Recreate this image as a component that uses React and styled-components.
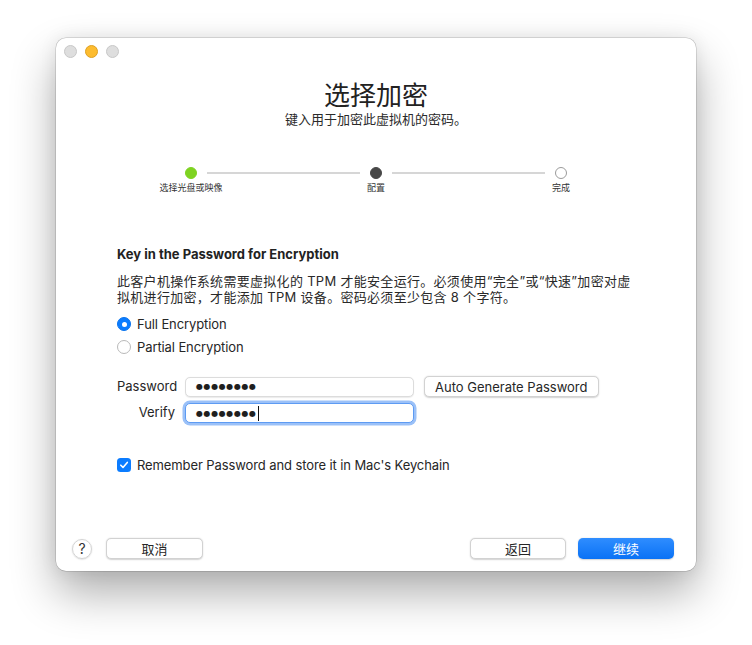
import React from 'react';
import styled, { createGlobalStyle } from 'styled-components';

const GlobalStyle = createGlobalStyle`
  html, body {
    margin: 0;
    padding: 0;
    background: #ffffff;
  }
  body {
    font-family: 'Inter', 'Noto Sans CJK SC', sans-serif;
    color: #262626;
    -webkit-font-smoothing: antialiased;
  }
`;

const Page = styled.div`
  width: 752px;
  height: 645px;
  padding: 38px 0 0 56px;
  box-sizing: border-box;
`;

const Window = styled.div`
  width: 640px;
  height: 533px;
  background: #ffffff;
  border-radius: 10px;
  display: flex;
  flex-direction: column;
  box-shadow: 0 0 0 0.5px rgba(0, 0, 0, 0.22), 0 22px 45px rgba(0, 0, 0, 0.32),
    0 0 18px rgba(0, 0, 0, 0.08);
`;

const TitleBar = styled.div`
  height: 26px;
  display: flex;
  align-items: center;
  gap: 8px;
  padding-left: 8px;
`;

const Light = styled.span`
  width: 11px;
  height: 11px;
  border-radius: 50%;
  background: ${(p) => (p.$active ? '#fdbc2f' : '#dedede')};
  border: 0.5px solid ${(p) => (p.$active ? '#dea123' : '#c8c8c8')};
`;

const Title = styled.h1`
  margin: 17px 0 0;
  font-size: 26px;
  line-height: 30px;
  font-weight: 400;
  text-align: center;
  color: #222;
`;

const Subtitle = styled.p`
  margin: 0;
  font-size: 13px;
  line-height: 16px;
  text-align: center;
  color: #2a2a2a;
`;

const Stepper = styled.div`
  margin-top: 40px;
  display: flex;
  justify-content: center;
  align-items: flex-start;
`;

const Step = styled.div`
  width: 12px;
  display: flex;
  flex-direction: column;
  align-items: center;
`;

const Dot = styled.span`
  width: 12px;
  height: 12px;
  border-radius: 50%;
  box-sizing: border-box;
  background: ${(p) => p.$color || '#fff'};
  border: 1px solid ${(p) => (p.$color ? p.$color : '#9b9b9b')};
`;

const StepLabel = styled.span`
  margin-top: 3px;
  font-size: 9px;
  line-height: 12px;
  white-space: nowrap;
  color: #333;
`;

const Connector = styled.span`
  width: 153px;
  height: 2px;
  margin: 5px 10px 0;
  background: #d6d6d6;
`;

const Content = styled.div`
  padding: 0 61px;
  display: flex;
  flex-direction: column;
`;

const Heading = styled.h2`
  margin: 52px 0 0;
  font-size: 13px;
  line-height: 16px;
  font-weight: 700;
  color: #222;
`;

const Paragraph = styled.p`
  margin: 11px 0 0;
  font-size: 13px;
  line-height: 16px;
  letter-spacing: 0.3px;
  color: #2a2a2a;
`;

const Options = styled.div`
  margin-top: 10px;
  display: flex;
  flex-direction: column;
  gap: 5px;
`;

const OptionRow = styled.label`
  display: flex;
  align-items: center;
  height: 18px;
  gap: 6px;
  font-size: 13px;
  letter-spacing: -0.1px;
  color: #262626;
`;

const Radio = styled.span`
  width: 14px;
  height: 14px;
  border-radius: 50%;
  box-sizing: border-box;
  display: flex;
  align-items: center;
  justify-content: center;
  background: ${(p) => (p.$checked ? '#0b7cff' : '#fff')};
  border: 1px solid ${(p) => (p.$checked ? '#0a74ee' : '#b9b9b9')};
  &::after {
    content: '';
    width: 5px;
    height: 5px;
    border-radius: 50%;
    background: #fff;
    display: ${(p) => (p.$checked ? 'block' : 'none')};
  }
`;

const Form = styled.div`
  margin-top: 20px;
  display: grid;
  grid-template-columns: 58px 229px auto;
  column-gap: 10px;
  row-gap: 6px;
  align-items: center;
`;

const FieldLabel = styled.span`
  font-size: 13px;
  text-align: right;
  color: #262626;
  margin-top: -2px;
`;

const Field = styled.div`
  height: 20px;
  box-sizing: border-box;
  border-radius: 5px;
  padding: 0 10px;
  display: flex;
  align-items: center;
  background: #fff;
  border: 1px solid ${(p) => (p.$focus ? '#5d9bf3' : '#dcdcdc')};
  box-shadow: ${(p) =>
    p.$focus ? '0 0 0 2.5px #9bc1f8' : '0 0.5px 1px rgba(0,0,0,0.08)'};
`;

const Mask = styled.span`
  font-family: 'DejaVu Sans', sans-serif;
  font-size: 8px;
  letter-spacing: 0.6px;
  color: #1f1f1f;
`;

const Caret = styled.span`
  width: 1px;
  height: 15px;
  background: #111;
  margin-left: 1px;
`;

const Button = styled.button`
  height: 21px;
  box-sizing: border-box;
  padding: 0 10px;
  border-radius: 5px;
  font-family: inherit;
  font-size: 13px;
  color: ${(p) => (p.$primary ? '#fff' : '#262626')};
  width: ${(p) => p.$width || 'auto'};
  justify-self: start;
  border: ${(p) => (p.$primary ? 'none' : '0.5px solid #d2d2d2')};
  background: ${(p) =>
    p.$primary ? 'linear-gradient(#2f8dff, #0a72f5)' : '#fff'};
  box-shadow: 0 0.5px 1.5px rgba(0, 0, 0, 0.18);
`;

const CheckRow = styled.label`
  margin-top: 34px;
  display: flex;
  align-items: center;
  gap: 6px;
  font-size: 13px;
  letter-spacing: -0.1px;
  color: #262626;
`;

const Checkbox = styled.span`
  width: 14px;
  height: 14px;
  border-radius: 3.5px;
  background: #0b7cff;
  display: flex;
  align-items: center;
  justify-content: center;
`;

const Footer = styled.div`
  margin-top: auto;
  padding: 0 22px 12px 16px;
  display: flex;
  align-items: center;
  gap: 14px;
`;

const HelpButton = styled.span`
  width: 20px;
  height: 20px;
  border-radius: 50%;
  box-sizing: border-box;
  border: 0.5px solid #d4d4d4;
  box-shadow: 0 0.5px 1.5px rgba(0, 0, 0, 0.18);
  display: flex;
  align-items: center;
  justify-content: center;
  font-size: 14px;
  color: #333;
`;

const Spacer = styled.span`
  flex: 1;
`;

const RightButtons = styled.div`
  display: flex;
  gap: 12px;
`;

export default function App() {
  return (
    <>
      <GlobalStyle />
      <Page>
        <Window>
          <TitleBar>
            <Light />
            <Light $active />
            <Light />
          </TitleBar>
          <Title>选择加密</Title>
          <Subtitle>键入用于加密此虚拟机的密码。</Subtitle>
          <Stepper>
            <Step>
              <Dot $color="#7ed321" />
              <StepLabel>选择光盘或映像</StepLabel>
            </Step>
            <Connector />
            <Step>
              <Dot $color="#474747" />
              <StepLabel>配置</StepLabel>
            </Step>
            <Connector />
            <Step>
              <Dot />
              <StepLabel>完成</StepLabel>
            </Step>
          </Stepper>
          <Content>
            <Heading>Key in the Password for Encryption</Heading>
            <Paragraph>
              此客户机操作系统需要虚拟化的 TPM 才能安全运行。必须使用“完全”或“快速”加密对虚
              <br />
              拟机进行加密，才能添加 TPM 设备。密码必须至少包含 8 个字符。
            </Paragraph>
            <Options>
              <OptionRow>
                <Radio $checked />
                Full Encryption
              </OptionRow>
              <OptionRow>
                <Radio />
                Partial Encryption
              </OptionRow>
            </Options>
            <Form>
              <FieldLabel>Password</FieldLabel>
              <Field>
                <Mask>●●●●●●●●</Mask>
              </Field>
              <Button>Auto Generate Password</Button>
              <FieldLabel>Verify</FieldLabel>
              <Field $focus>
                <Mask>●●●●●●●●</Mask>
                <Caret />
              </Field>
            </Form>
            <CheckRow>
              <Checkbox>
                <svg width="10" height="10" viewBox="0 0 10 10">
                  <path
                    d="M1.8 5.2 L4 7.4 L8.3 2.4"
                    fill="none"
                    stroke="#fff"
                    strokeWidth="1.6"
                    strokeLinecap="round"
                    strokeLinejoin="round"
                  />
                </svg>
              </Checkbox>
              Remember Password and store it in Mac's Keychain
            </CheckRow>
          </Content>
          <Footer>
            <HelpButton>?</HelpButton>
            <Button $width="97px">取消</Button>
            <Spacer />
            <RightButtons>
              <Button $width="96px">返回</Button>
              <Button $width="96px" $primary>
                继续
              </Button>
            </RightButtons>
          </Footer>
        </Window>
      </Page>
    </>
  );
}
